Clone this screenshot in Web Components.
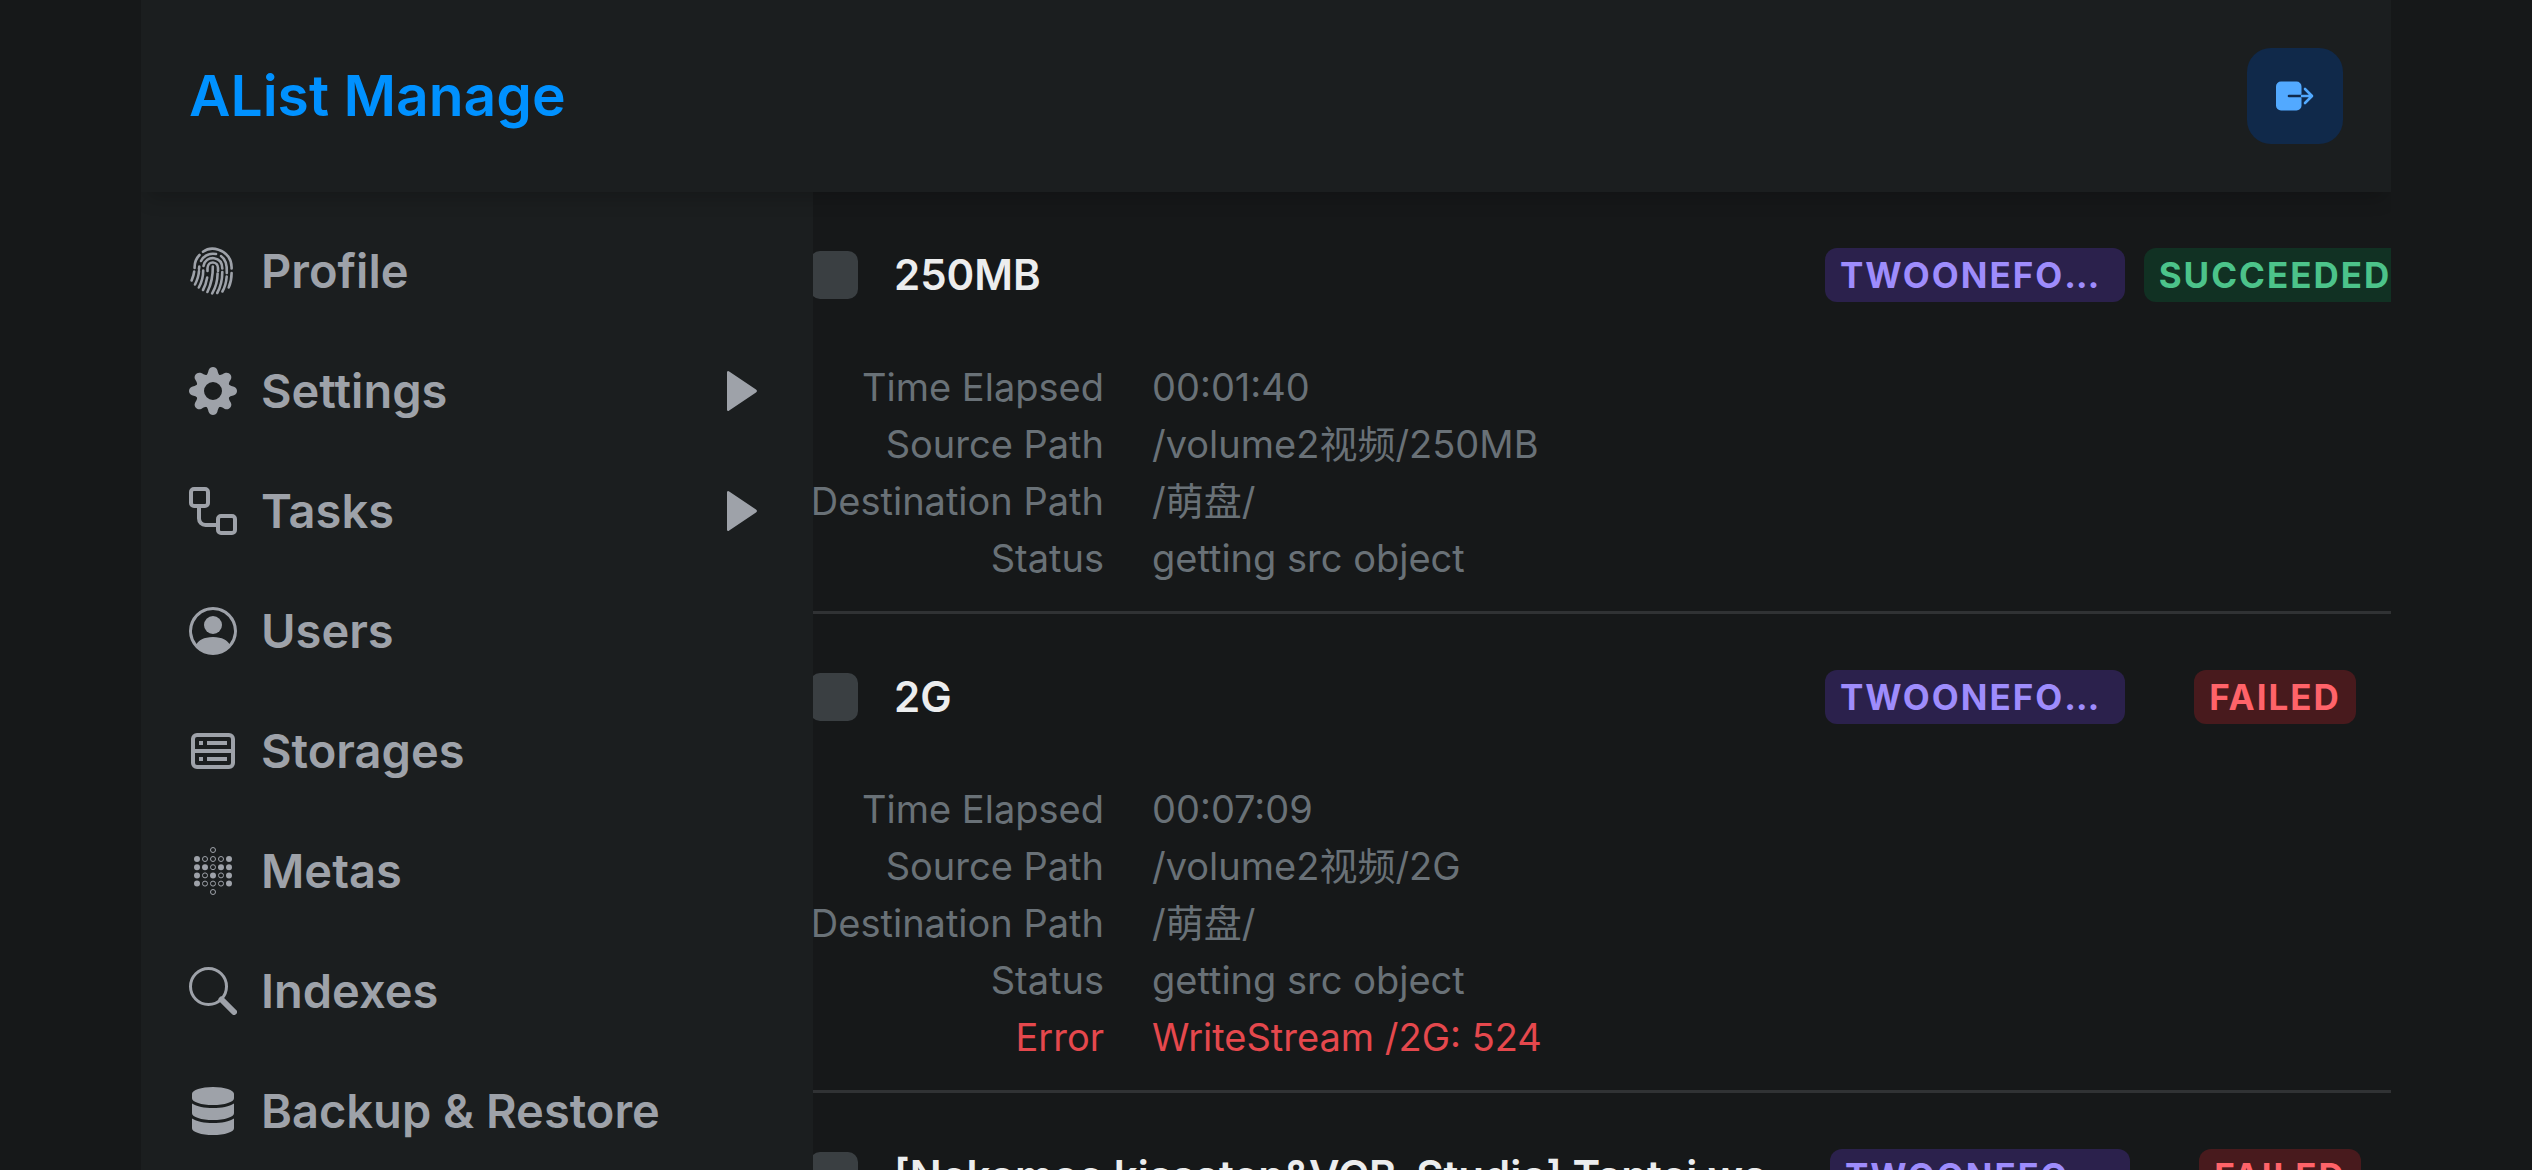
<!DOCTYPE html>
<html lang="en">
<head>
<meta charset="utf-8">
<title>AList Manage</title>
<style>
  html, body { margin: 0; height: 100%; }
  body { background: #161819; color: #ecedee; font-family: Inter, "Noto Sans CJK SC", sans-serif; overflow: hidden; }
</style>
</head>
<body>
<manage-app></manage-app>
<script>
const ICONS = {
  fingerprint: `<svg viewBox="0 0 48 48" fill="none" stroke="currentColor" stroke-width="2.6" stroke-linecap="round">
    <path d="M14 4.800C18 1.800 24 .8 29.500 2.800C38 5.500 43 12.500 42.600 21.500"/>
    <path d="M10.500 8C7 11.500 5.400 15.500 5.600 21"/>
    <path d="M12 14C15 8.500 20.500 6 27 7"/>
    <path d="M32 9C36.500 12 38.300 17 37.800 26"/>
    <path d="M10.300 19.500L10 22"/>
    <path d="M14.500 19C15.500 13.500 20 10.600 25 11.200C30.500 12 33.300 16 33.300 21.500"/>
    <path d="M18.500 24V21C18.800 17.500 21 15.300 24 15.500C27 15.700 29 18 29 21V24"/>
    <path d="M5.200 24.500C4.800 28 3.800 30.500 2.600 33.500"/>
    <path d="M10 24C9.700 29.500 8 33.500 6 37.500"/>
    <path d="M14.200 23.500C14.300 30 12.500 35.500 9.800 40.500"/>
    <path d="M18.200 30.500C17.300 35.500 16 39.500 14 43"/>
    <path d="M23.800 19.500C24 29 22.300 37 18.400 45"/>
    <path d="M28.600 26.500C28.500 34 27 40 23.200 46.300"/>
    <path d="M33.300 25C33.300 33 31.500 40 28.200 46"/>
    <path d="M37.700 29.500C37.300 35 36 40 33.400 44.500"/>
    <path d="M42.600 26C42.600 32 41.500 36.500 39.700 40.500"/></svg>`,
  gear: `<svg viewBox="-24 -24 48 48" fill="currentColor"><circle r="13" fill="none" stroke="currentColor" stroke-width="8"/>${
    [0, 45, 90, 135, 180, 225, 270, 315].map(a =>
      `<path transform="rotate(${a})" d="M-9 -14C-5 -16 -5 -19 -4.300 -21C-3 -25 3 -25 4.300 -21C5 -19 5 -16 9 -14Z"/>`).join("")
  }</svg>`,
  tasks: `<svg viewBox="0 0 48 48" fill="none" stroke="currentColor" stroke-width="4"><rect x="2" y="2" width="17" height="17" rx="3"/><rect x="29" y="29" width="17" height="17" rx="3"/><path d="M10 19V31.500A6.500 6.500 0 0 0 16.500 38H29"/></svg>`,
  user: `<svg viewBox="0 0 16 16" fill="currentColor"><path d="M11 6a3 3 0 1 1-6 0 3 3 0 0 1 6 0z"/><path fill-rule="evenodd" d="M0 8a8 8 0 1 1 16 0A8 8 0 0 1 0 8zm8-7a7 7 0 0 0-5.468 11.370C3.242 11.226 4.805 10 8 10s4.757 1.225 5.468 2.370A7 7 0 0 0 8 1z"/></svg>`,
  storage: `<svg viewBox="0 0 48 48" fill="none" stroke="currentColor" stroke-width="4"><rect x="4" y="8" width="40" height="32" rx="4"/><path d="M4 24H44M10 16H14M18 16H38M10 32H14M18 32H38"/></svg>`,
  metas: (() => {
    const rows = ["10001", "11011", "10101", "10001"];
    let s = "";
    const dot = (x, y, full) => s += full
      ? `<circle cx="${x}" cy="${y}" r="3" fill="currentColor"/>`
      : `<circle cx="${x}" cy="${y}" r="2.500" fill="none" stroke="currentColor"/>`;
    dot(24, 3, false);
    rows.forEach((r, j) => [...r].forEach((c, i) => dot(8 + i * 8, 12 + j * 8.200, c === "1")));
    dot(24, 45, false);
    return `<svg viewBox="0 0 48 48">${s}</svg>`;
  })(),
  search: `<svg viewBox="0 0 48 48" fill="none" stroke="currentColor"><circle cx="19.500" cy="19.500" r="18" stroke-width="3"/><path d="M32.500 32.500L45 45" stroke-width="6" stroke-linecap="round"/></svg>`,
  database: `<svg viewBox="0 0 448 512" fill="currentColor"><path d="M448 73.143v45.714C448 159.143 347.667 192 224 192S0 159.143 0 118.857V73.143C0 32.857 100.333 0 224 0s224 32.857 224 73.143zM448 176v102.857C448 319.143 347.667 352 224 352S0 319.143 0 278.857V176c48.125 33.143 136.208 48.572 224 48.572S399.874 209.143 448 176zm0 160v102.857C448 479.143 347.667 512 224 512S0 479.143 0 438.857V336c48.125 33.143 136.208 48.572 224 48.572S399.874 369.143 448 336z"/></svg>`,
  play: `<svg viewBox="0 0 48 48" fill="currentColor"><path d="M10 5.500C10 4 11.200 3.500 12.200 4.500L39 22.500C40.300 23.500 40.300 24.500 39 25.500L12.200 43.500C11.200 44.500 10 44 10 42.500Z"/></svg>`,
  logout: `<svg viewBox="0 0 48 48" fill="none"><rect x="5" y="9.500" width="25.500" height="29" rx="5" fill="currentColor"/><path d="M18 24H31" stroke="#10294a" stroke-width="2.600" stroke-linecap="round"/><path d="M31 24H40M34 17L41 24L34 31" stroke="currentColor" stroke-width="2.600" stroke-linecap="round" stroke-linejoin="round"/></svg>`
};

function define(name, html, setup) {
  const tpl = document.createElement("template");
  tpl.innerHTML = html;
  customElements.define(name, class extends HTMLElement {
    constructor() {
      super();
      this.attachShadow({ mode: "open" }).append(tpl.content.cloneNode(true));
    }
    connectedCallback() { if (setup) setup(this, this.shadowRoot); }
  });
}

define("ui-icon", `<style>
  :host { display: block; width: 48px; height: 48px; flex: none; }
  span, svg { display: block; width: 100%; height: 100%; }
</style><span></span>`, (el, root) => {
  root.querySelector("span").innerHTML = ICONS[el.getAttribute("name")] || "";
});

define("manage-header", `<style>
  :host { display: flex; align-items: center; justify-content: space-between; height: 192px; padding: 0 48px; box-sizing: border-box;
    background: #1b1e1f; box-shadow: 0 12px 18px -6px rgba(0,0,0,.2); position: relative; z-index: 2; }
  h1 { margin: 0; font-size: 57px; line-height: 72px; font-weight: 600; color: #0091ff; }
  button { width: 96px; height: 96px; padding: 0; border: 0; border-radius: 24px; background: #10294a; color: #52a9ff;
    display: flex; align-items: center; justify-content: center; }
</style><h1><slot></slot></h1><button type="button" aria-label="Log out"><ui-icon name="logout"></ui-icon></button>`);

define("side-item", `<style>
  :host { display: block; }
  a { display: flex; align-items: center; gap: 24px; height: 118px; color: #9ea2a9; text-decoration: none;
    font-size: 47px; font-weight: 600; line-height: 72px; white-space: nowrap; }
  .label { flex: 1; }
</style><a href="#"><span class="label"><slot></slot></span></a>`, (el, root) => {
  const link = root.querySelector("a");
  const icon = document.createElement("ui-icon");
  icon.setAttribute("name", el.getAttribute("icon"));
  link.prepend(icon);
  if (el.hasAttribute("expandable")) {
    const arrow = document.createElement("ui-icon");
    arrow.setAttribute("name", "play");
    link.append(arrow);
  }
});

define("side-menu", `<style>
  :host { display: flex; flex-direction: column; gap: 2px; width: 672px; flex: none; box-sizing: border-box;
    padding: 20px 48px 0; margin-right: -3px; background: #1b1e1f; position: relative; z-index: 1; }
</style><slot></slot>`);

define("status-badge", `<style>
  :host { display: block; flex: none; box-sizing: border-box; height: 54px; padding: 0 15px; border-radius: 12px; font-size: 35px; line-height: 54px;
    font-weight: 700; letter-spacing: 2px; text-transform: uppercase; white-space: nowrap; overflow: hidden; text-overflow: ellipsis; }
  :host([tone=accent]) { background: #2b214c; color: #9e8cfc; width: 300px; }
  :host([tone=success]) { background: #113123; color: #4cc38a; }
  :host([tone=danger]) { background: #481a1d; color: #ff6369; }
</style><slot></slot>`);

define("task-row", `<style>
  :host { display: block; border-bottom: 3px solid #303234; }
  .head { display: flex; align-items: center; padding-top: 56px; height: 54px; }
  input { appearance: none; margin: 0 36px 0 0; width: 48px; height: 48px; flex: none; border-radius: 10px; background: #3a3f42; }
  label { flex: 1 0 auto; max-width: 936px; box-sizing: border-box; padding-right: 12px; font-size: 42px; line-height: 54px;
    font-weight: 600; white-space: nowrap; overflow: hidden; text-overflow: ellipsis; }
  .state { flex: none; width: 232px; margin-left: 34px; display: flex; justify-content: center; }
  .body { padding: 57px 0 24px; }
</style>
<div class="head"><input type="checkbox" id="pick"><label for="pick"></label>
<slot name="type"></slot><div class="state"><slot name="state"></slot></div></div>
<div class="body"><slot></slot></div>`, (el, root) => {
  root.querySelector("label").textContent = el.getAttribute("name");
});

define("task-field", `<style>
  :host { display: flex; gap: 48px; font-size: 38px; line-height: 57px; color: #697177; white-space: nowrap; }
  :host([error]) { color: #e5484d; }
  .key { width: 294px; flex: none; display: flex; justify-content: flex-end; }
</style><div class="key"></div><div><slot></slot></div>`, (el, root) => {
  root.querySelector(".key").textContent = el.getAttribute("label");
});

define("manage-app", `<style>
  :host { display: block; height: 100%; box-sizing: border-box; padding: 0 141px; }
  .frame { height: 100%; overflow: hidden; display: flex; flex-direction: column; }
  manage-header { flex: none; }
  .split { flex: 1; min-height: 0; display: flex; }
  main { flex: 1; min-width: 0; overflow: hidden; }
</style>
<div class="frame">
<manage-header>AList Manage</manage-header>
<div class="split">
<side-menu role="navigation">
  <side-item icon="fingerprint">Profile</side-item>
  <side-item icon="gear" expandable>Settings</side-item>
  <side-item icon="tasks" expandable>Tasks</side-item>
  <side-item icon="user">Users</side-item>
  <side-item icon="storage">Storages</side-item>
  <side-item icon="metas">Metas</side-item>
  <side-item icon="search">Indexes</side-item>
  <side-item icon="database">Backup &amp; Restore</side-item>
</side-menu>
<main>
  <task-row name="250MB">
    <status-badge slot="type" tone="accent">twoonefour</status-badge>
    <status-badge slot="state" tone="success">succeeded</status-badge>
    <task-field label="Time Elapsed">00:01:40</task-field>
    <task-field label="Source Path">/volume2视频/250MB</task-field>
    <task-field label="Destination Path">/萌盘/</task-field>
    <task-field label="Status">getting src object</task-field>
  </task-row>
  <task-row name="2G">
    <status-badge slot="type" tone="accent">twoonefour</status-badge>
    <status-badge slot="state" tone="danger">failed</status-badge>
    <task-field label="Time Elapsed">00:07:09</task-field>
    <task-field label="Source Path">/volume2视频/2G</task-field>
    <task-field label="Destination Path">/萌盘/</task-field>
    <task-field label="Status">getting src object</task-field>
    <task-field label="Error" error>WriteStream /2G: 524</task-field>
  </task-row>
  <task-row name="[Nekomoe kissaten&amp;VCB-Studio] Tantei wa Mou">
    <status-badge slot="type" tone="accent">twoonefour</status-badge>
    <status-badge slot="state" tone="danger">failed</status-badge>
  </task-row>
</main>
</div>
</div>`);
</script>
</body>
</html>
